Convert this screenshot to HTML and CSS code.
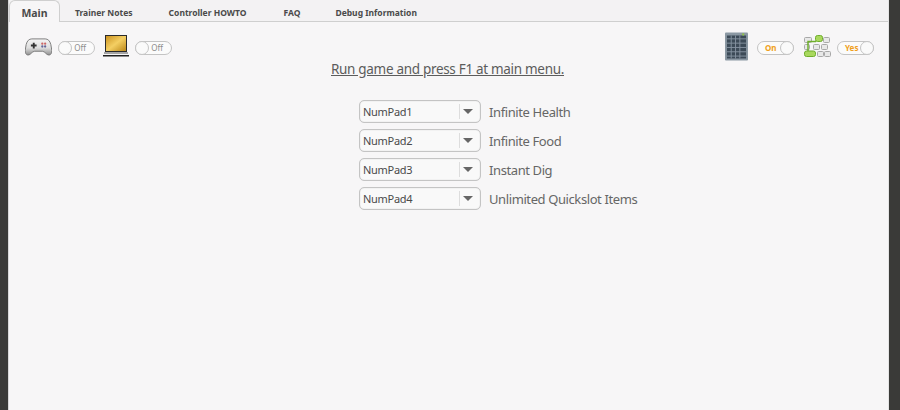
FILE: index.html
```html
<!DOCTYPE html>
<html lang="en">
<head>
    <meta charset="UTF-8">
    <title>Trainer</title>
    <link rel="stylesheet" href="styles.css">
</head>
<body>
    <div class="window">
        <div class="tabs">
            <div class="tab active">Main</div>
            <div class="tab notes">Trainer Notes</div>
            <div class="tab howto">Controller HOWTO</div>
            <div class="tab faq">FAQ</div>
            <div class="tab debug">Debug Information</div>
        </div>

        <div class="content">
            <div class="toolbar">
                <div class="tool-group">
                    <!-- gamepad -->
                    <svg class="icon-pad" width="27" height="19" viewBox="0 0 28 20">
                        <defs>
                            <linearGradient id="padBody" x1="0" y1="0" x2="0" y2="1">
                                <stop offset="0" stop-color="#f4f4f4"/>
                                <stop offset="0.55" stop-color="#dedede"/>
                                <stop offset="1" stop-color="#8f8f8f"/>
                            </linearGradient>
                        </defs>
                        <path d="M7 2h14c3 0 5 2 6 6l1 6c0 3-1 5-3 5-3 0-4-4-7-4h-8c-3 0-4 4-7 4-2 0-3-2-3-5l1-6c1-4 3-6 6-6z" fill="url(#padBody)" stroke="#7a7a7a"/>
                        <path d="M6 8h2V6h2v2h2v2h-2v2H8v-2H6z" fill="#333"/>
                        <circle cx="18" cy="7" r="1.200" fill="#c66"/>
                        <circle cx="21" cy="7" r="1.200" fill="#c66"/>
                        <circle cx="18" cy="10" r="1.200" fill="#669"/>
                        <circle cx="21" cy="10" r="1.200" fill="#669"/>
                    </svg>
                    <div class="toggle off"><span class="knob"></span><span class="toggle-text">Off</span></div>
                    <!-- laptop -->
                    <svg class="icon-laptop" width="26" height="22" viewBox="0 0 26 22">
                        <defs>
                            <linearGradient id="screen" x1="0" y1="0" x2="1" y2="1">
                                <stop offset="0" stop-color="#c98f1c"/>
                                <stop offset="0.5" stop-color="#f4cf63"/>
                                <stop offset="1" stop-color="#b98414"/>
                            </linearGradient>
                        </defs>
                        <rect x="2.500" y="0.500" width="21" height="16" fill="url(#screen)" stroke="#2b2b2b"/>
                        <rect x="1" y="17" width="24" height="2" fill="#a5a5a5"/>
                        <rect x="0" y="20" width="26" height="1.500" fill="#222"/>
                    </svg>
                    <div class="toggle off"><span class="knob"></span><span class="toggle-text">Off</span></div>
                </div>
                <div class="tool-group">
                    <!-- numpad -->
                    <svg class="icon-numpad" width="23" height="29" viewBox="0 0 24 29">
                        <rect width="24" height="29" rx="1" fill="#8b98a3"/>
                        <rect x="2" y="3" width="20" height="24" fill="#3c4a57"/>
                        <path d="M2 6.500h20M2 11h20M2 15.500h20M2 20h20M2 24.500h20M6.500 3v24M11 3v24M15.500 3v24" stroke="#8592a0" stroke-width="1" fill="none"/>
                        <circle cx="19" cy="2" r="1.200" fill="#8fc04a"/>
                    </svg>
                    <div class="toggle on"><span class="toggle-text">On</span><span class="knob"></span></div>
                    <!-- key layout -->
                    <svg class="icon-keys" width="27" height="22" viewBox="0 0 27 22">
                        <g fill="#e8e8e8" stroke="#a8a8a8">
                            <rect x="0.500" y="2.500" width="7" height="5" rx="1"/>
                            <rect x="19.500" y="2.500" width="6" height="5" rx="1"/>
                            <rect x="0.500" y="9.500" width="5" height="5" rx="1"/>
                            <rect x="9.500" y="9.500" width="6" height="5" rx="1"/>
                            <rect x="17.500" y="9.500" width="6" height="5" rx="1"/>
                            <rect x="13.500" y="16.500" width="6" height="5" rx="1"/>
                            <rect x="20.500" y="16.500" width="6" height="5" rx="1"/>
                        </g>
                        <path d="M4 16V6.500h8" fill="none" stroke="#6fae2c" stroke-width="1.500"/>
                        <rect x="11.500" y="0.500" width="7" height="6" rx="2" fill="#a9d85d" stroke="#6fae2c"/>
                        <rect x="0.500" y="16" width="11" height="5.500" rx="2" fill="#a9d85d" stroke="#6fae2c"/>
                    </svg>
                    <div class="toggle on"><span class="toggle-text">Yes</span><span class="knob"></span></div>
                </div>
            </div>

            <h1 class="prompt">Run game and press F1 at main menu.</h1>

            <div class="hotkeys">
                <div class="hotkey">
                    <div class="select"><span class="select-value">NumPad1</span><span class="select-arrow"></span></div>
                    <span class="hotkey-label">Infinite Health</span>
                </div>
                <div class="hotkey">
                    <div class="select"><span class="select-value">NumPad2</span><span class="select-arrow"></span></div>
                    <span class="hotkey-label">Infinite Food</span>
                </div>
                <div class="hotkey">
                    <div class="select"><span class="select-value">NumPad3</span><span class="select-arrow"></span></div>
                    <span class="hotkey-label">Instant Dig</span>
                </div>
                <div class="hotkey">
                    <div class="select"><span class="select-value">NumPad4</span><span class="select-arrow"></span></div>
                    <span class="hotkey-label">Unlimited Quickslot Items</span>
                </div>
            </div>
        </div>
    </div>
</body>
</html>
```

FILE: styles.css
```css
html, body {
    height: 100%;
}
body {
    margin: 0;
    overflow: hidden;
    background-color: #3a3a38;
    font-family: "Noto Sans", sans-serif;
    color: #555;
}
.window {
    box-sizing: border-box;
    height: 410px;
    margin: 0 11px 0 8px;
    background-color: #f7f6f7;
    border-left: 1px solid #d8d8d8;
    border-right: 1px solid #e4e4e4;
    display: flex;
    flex-direction: column;
}
.tabs {
    display: flex;
    height: 22px;
    box-sizing: border-box;
    border-bottom: 1px solid #cfcfcf;
    background-color: #f3f2f3;
    font-size: 8.500px;
    font-weight: bold;
    color: #4a4a4a;
}
.tab {
    line-height: 25px;
    height: 21px;
    white-space: nowrap;
}
.tab.active {
    box-sizing: border-box;
    width: 51px;
    height: 22px;
    text-align: center;
    font-size: 10.500px;
    line-height: 25px;
    background-color: #f7f6f7;
    border: 1px solid #cfcfcf;
    border-bottom: none;
    border-radius: 6px 6px 0 0;
}
.tab.notes { margin-left: 15px; }
.tab.howto { margin-left: 36px; }
.tab.faq { margin-left: 37px; }
.tab.debug { margin-left: 35px; }
.content {
    flex: 1;
    padding: 0 14px 0 16px;
}
.toolbar {
    display: flex;
    justify-content: space-between;
    padding-top: 9px;
    height: 30px;
}
.tool-group {
    display: flex;
    align-items: center;
}
.icon-pad {
    margin-right: 6px;
}
.icon-laptop {
    margin: 0 6px 0 8px;
}
.icon-numpad {
    margin-right: 9px;
}
.icon-keys {
    margin: 0 6px 0 10px;
}
.toggle {
    box-sizing: border-box;
    width: 37px;
    height: 14px;
    margin-top: 3px;
    border: 1px solid #c4c4c4;
    border-radius: 7px;
    background-color: #fbfbfb;
    display: flex;
    align-items: center;
    justify-content: space-between;
    font-size: 8px;
}
.toggle.off {
    color: #8c8c8c;
}
.toggle.off .toggle-text {
    margin-right: 8px;
}
.toggle.on {
    color: #f0a020;
    font-weight: bold;
}
.toggle.on .toggle-text {
    margin-left: 7px;
}
.knob {
    box-sizing: border-box;
    width: 14px;
    height: 14px;
    margin: 0 -1px;
    border: 1px solid #c4c4c4;
    border-radius: 50%;
    background-color: #fafafa;
}
.prompt {
    margin: -1px 0 0 0;
    padding-right: 4px;
    text-align: center;
    font-size: 13.500px;
    letter-spacing: -0.310px;
    line-height: 18px;
    font-weight: normal;
    text-decoration: underline;
    color: #5c5c5c;
}
.hotkeys {
    margin: 22px 0 0 334px;
    display: flex;
    flex-direction: column;
    gap: 6px;
}
.hotkey {
    display: flex;
    align-items: center;
    gap: 8px;
}
.select {
    box-sizing: border-box;
    width: 122px;
    height: 23px;
    border: 1px solid #c4c4c4;
    border-radius: 5px;
    background-color: #f9f9f9;
    box-shadow: inset 0 0 1px #bbb;
    display: flex;
    align-items: center;
    justify-content: space-between;
    font-size: 11px;
    letter-spacing: -0.300px;
    color: #4a4a4a;
}
.select-value {
    padding-left: 3px;
}
.select-arrow {
    position: relative;
    width: 20px;
    height: 15px;
    border-left: 1px solid #ddd;
}
.select-arrow::after {
    content: "";
    position: absolute;
    left: 3px;
    top: 5px;
    border-style: solid;
    border-width: 5px 5px 0 5px;
    border-color: #666 transparent transparent transparent;
}
.hotkey-label {
    font-size: 13px;
    letter-spacing: -0.400px;
    color: #666;
}
```
